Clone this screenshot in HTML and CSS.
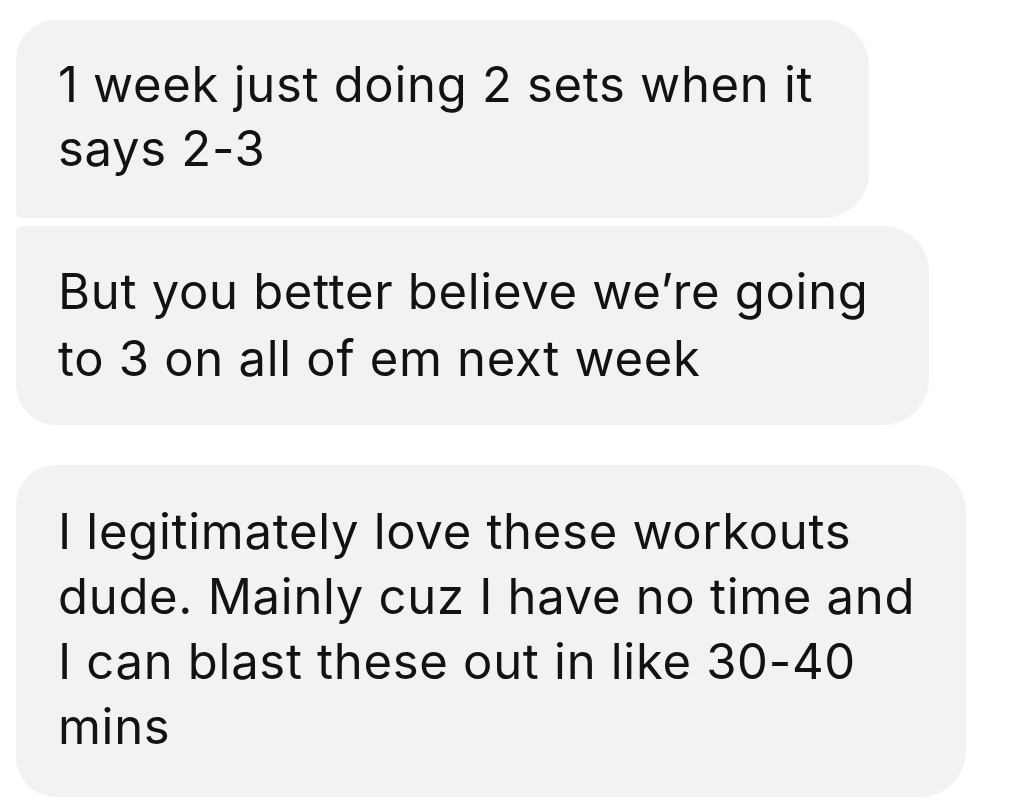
FILE: index.html
```html
<!DOCTYPE html>
<html lang="en">
<head>
<meta charset="utf-8">
<title>Messages</title>
<link rel="stylesheet" href="styles.css">
</head>
<body>
<main class="thread">
  <div class="group">
    <div class="bubble first">1 week just doing 2 sets when it<br>says 2-3</div>
    <div class="bubble last two">But you better believe we’re going<br>to 3 on all of em next week</div>
  </div>
  <div class="group">
    <div class="bubble single">I legitimately love these workouts<br>dude. Mainly cuz I have no time and<br>I can blast these out in like 30-40<br>mins</div>
  </div>
</main>
</body>
</html>
```

FILE: styles.css
```css
html, body {
  margin: 0;
  padding: 0;
  background: #ffffff;
}

body {
  font-family: Inter, "Noto Sans", "Liberation Sans", sans-serif;
  color: #111214;
  width: 1029px;
  height: 805px;
  overflow: hidden;
}

.thread {
  display: flex;
  flex-direction: column;
  gap: 40px;
  padding: 20px 0 0 16px;
}

.group {
  display: flex;
  flex-direction: column;
  align-items: flex-start;
  gap: 8px;
}

.bubble {
  background: #f1f2f4;
  font-size: 49px;
  line-height: 64px;
  letter-spacing: 0.7px;
  padding: 33px 56px 37px 42px;
  white-space: nowrap;
}

.first {
  border-radius: 40px 46px 46px 6px;
}

.last {
  border-radius: 6px 46px 46px 40px;
}

.two {
  padding-top: 32px;
  padding-right: 60px;
  padding-bottom: 33px;
  line-height: 67px;
}

.single {
  border-radius: 40px 46px 46px 40px;
  line-height: 65px;
  padding-top: 34px;
  padding-right: 51px;
  padding-bottom: 38px;
}
```
